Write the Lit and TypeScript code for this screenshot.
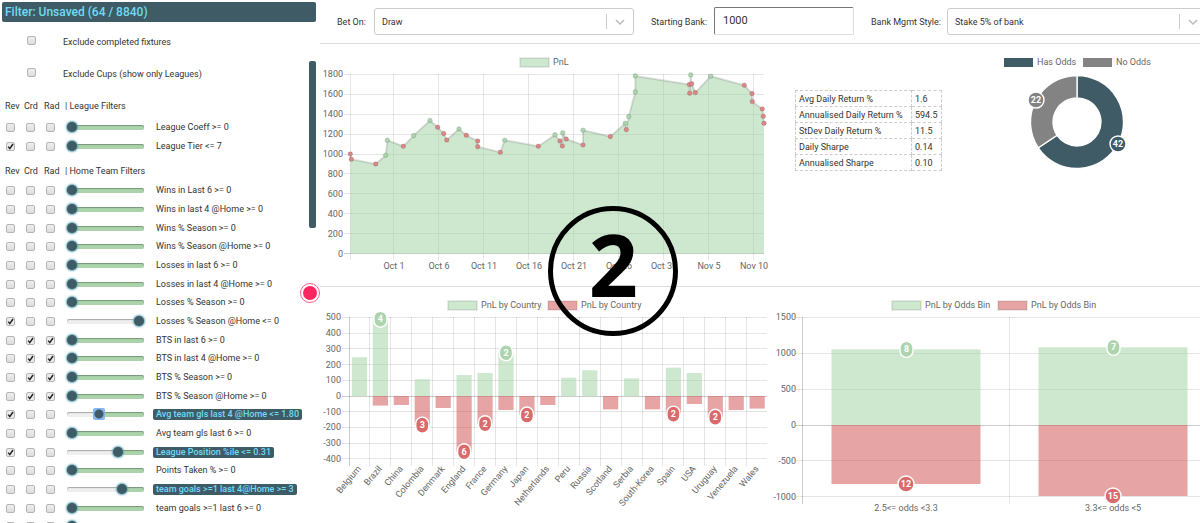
import { LitElement, html, svg, css } from "lit";
import { customElement } from "lit/decorators.js";

type Tone = "g" | "r";
type Filter = { label: string; ticks?: string; value?: number; active?: boolean; focus?: boolean };

const LEAGUE: Filter[] = [
  { label: "League Coeff >= 0" },
  { label: "League Tier <= 7", ticks: "100" },
];

const HOME: Filter[] = [
  { label: "Wins in Last 6 >= 0" },
  { label: "Wins in last 4 @Home >= 0" },
  { label: "Wins % Season >= 0" },
  { label: "Wins % Season @Home >= 0" },
  { label: "Losses in last 6 >= 0" },
  { label: "Losses in last 4 @Home >= 0" },
  { label: "Losses % Season >= 0" },
  { label: "Losses % Season @Home <= 0", ticks: "100", value: 100 },
  { label: "BTS in last 6 >= 0", ticks: "011" },
  { label: "BTS in last 4 @Home >= 0", ticks: "011" },
  { label: "BTS % Season >= 0", ticks: "011" },
  { label: "BTS % Season @Home >= 0", ticks: "011" },
  { label: "Avg team gls last 4 @Home <= 1.80", ticks: "100", value: 40, active: true, focus: true },
  { label: "Avg team gls last 6 >= 0" },
  { label: "League Position %ile <= 0.31", ticks: "100", value: 69, active: true },
  { label: "Points Taken % >= 0" },
  { label: "team goals >=1 last 4@Home >= 3", value: 75, active: true },
  { label: "team goals >=1 last 6 >= 0" },
  { label: "" },
];

const STATS = [
  ["Avg Daily Return %", "1.6"],
  ["Annualised Daily Return %", "594.5"],
  ["StDev Daily Return %", "11.5"],
  ["Daily Sharpe", "0.14"],
  ["Annualised Sharpe", "0.10"],
];

/* Horizontal position on the time axis, bank after the bet, win or loss */
const BANK: [number, number, Tone][] = [
  [30.3, 1000, "r"], [31.3, 947, "r"], [55.7, 900, "r"], [65.7, 987, "g"], [67.3, 1138, "g"],
  [83.3, 1078, "r"], [93.7, 1185, "g"], [110, 1336, "g"], [117.7, 1269, "r"], [123.7, 1205, "r"],
  [126.7, 1141, "r"], [139, 1252, "g"], [146.3, 1188, "r"], [157.7, 1131, "r"], [157.7, 1074, "r"],
  [180.3, 1017, "r"], [184.7, 1138, "g"], [218.3, 1078, "r"], [235, 1192, "g"], [240, 1131, "r"],
  [242.3, 1081, "r"], [242.7, 1212, "g"], [246.3, 1151, "r"], [263, 1091, "r"], [263, 1239, "g"],
  [290.3, 1175, "r"], [305.3, 1309, "g"], [306.3, 1245, "r"], [308.7, 1376, "g"], [315.3, 1624, "g"],
  [315.3, 1785, "g"], [369.3, 1698, "r"], [369.7, 1611, "r"], [370.7, 1795, "g"], [371.7, 1705, "r"],
  [375.3, 1617, "r"], [390.7, 1782, "g"], [424.3, 1691, "r"], [432, 1607, "r"], [432.3, 1527, "r"],
  [442.3, 1453, "r"], [443.3, 1379, "r"], [444, 1309, "r"],
];
const DATES = ["Oct 1", "Oct 6", "Oct 11", "Oct 16", "Oct 21", "Oct 26", "Oct 31", "Nov 5", "Nov 10"];

/* Country, winnings, losses, winning bets shown, losing bets shown */
const COUNTRIES: [string, number, number, number?, number?][] = [
  ["Belgium", 246, 0], ["Brazil", 488, -61, 4], ["China", 0, -57], ["Colombia", 106, -185, 0, 3],
  ["Denmark", 0, -76], ["England", 133, -354, 0, 6], ["France", 146, -176, 0, 2], ["Germany", 275, -89, 2],
  ["Japan", 0, -121, 0, 2], ["Netherlands", 0, -57], ["Peru", 116, 0], ["Russia", 163, 0],
  ["Scotland", 0, -85], ["Serbia", 112, 0], ["South-Korea", 0, -85], ["Spain", 180, -115, 0, 2],
  ["USA", 146, -51], ["Uruguay", 0, -135, 0, 2], ["Venezuela", 0, -89], ["Wales", 0, -80],
];

const ODDS: [string, number, number, number, number][] = [
  ["2.5<= odds <3.3", 1055, -823, 8, 12],
  ["3.3<= odds <5", 1083, -990, 7, 15],
];

const crisp = (n: number) => Math.floor(n) + 0.5;

const chartStyles = css`
  :host { display: block; min-width: 0; }
  svg { display: block; width: 100%; height: auto; overflow: visible; }
  text { font: 9px Roboto, "Liberation Sans", sans-serif; fill: #666; }
  .end { text-anchor: end; }
  .mid { text-anchor: middle; }
  .grid { stroke: rgba(0, 0, 0, 0.1); }
  .zero { stroke: rgba(0, 0, 0, 0.2); }
  .g { fill: rgba(165, 211, 167, 0.55); }
  .r { fill: rgba(211, 90, 90, 0.55); }
  .key { stroke: rgba(0, 0, 0, 0.08); stroke-width: 2; }
  .badge { stroke: #fff; stroke-width: 1.4; }
  .badge.g { fill: #aed4ae; }
  .badge.r { fill: #d86c6c; }
  .count { font-size: 9px; font-weight: 700; fill: #fff; text-anchor: middle; }
`;

const legend = (x: number, tone: Tone, label: string) => svg`
  <rect class="key ${tone}" x=${x + 1} y="14" width="29" height="9"></rect>
  <text x=${x + 34} y="21">${label}</text>`;

const badge = (x: number, y: number, tone: Tone, n: number) => {
  const w = n > 9 ? 16 : 13;
  return svg`
    <rect class="badge ${tone}" x=${x - w / 2} y=${y - 8} width=${w} height="16" rx=${w / 2}></rect>
    <text class="count" x=${x} y=${y + 3}>${n}</text>`;
};

@customElement("bank-chart")
class BankChart extends LitElement {
  static styles = [chartStyles, css`
    .line { fill: none; stroke: rgba(0, 0, 0, 0.12); stroke-width: 2; stroke-linejoin: round; }
    .dot { stroke: rgba(0, 0, 0, 0.12); }
    .dot.g { fill: rgba(165, 211, 167, 0.9); }
    .dot.r { fill: #dc8686; }
  `];
  render() {
    const y = (v: number) => 209.5 - v * 0.0995;
    const path = BANK.map(([px, v]) => `${px},${y(v)}`).join(" ");
    const levels = [0, 200, 400, 600, 800, 1000, 1200, 1400, 1600, 1800];
    return html`<svg viewBox="0 0 455 242" role="img" aria-label="PnL">
      ${legend(199, "g", "PnL")}
      ${levels.map((v) => svg`
        <line class=${v ? "grid" : "zero"} x1="24" x2="444" y1=${crisp(y(v))} y2=${crisp(y(v))}></line>
        <text class="end" x="23" y=${y(v) + 3}>${v}</text>`)}
      <line class="grid" x1="30.5" x2="30.5" y1="30" y2="216"></line>
      ${DATES.map((d, i) => svg`
        <line class="grid" x1=${crisp(73 + i * 45)} x2=${crisp(73 + i * 45)} y1="30" y2="216"></line>
        <text class="mid" x=${74 + i * 45} y="225">${d}</text>`)}
      <polygon class="g" points="30.3,209.5 ${path} 444,209.5"></polygon>
      <polyline class="line" points=${path}></polyline>
      ${BANK.map(([px, v, t]) => svg`<circle class="dot ${t}" cx=${px} cy=${y(v)} r="2.3"></circle>`)}
    </svg>`;
  }
}

@customElement("country-chart")
class CountryChart extends LitElement {
  static styles = chartStyles;
  render() {
    const step = 20.93;
    const y = (v: number) => 109 - v * 0.1574;
    const cx = (i: number) => 29 + step * (i + 0.5);
    const levels = [500, 400, 300, 200, 100, 0, -100, -200, -300, -400];
    return html`<svg viewBox="0 0 460 236" role="img" aria-label="PnL by Country">
      ${legend(127, "g", "PnL by Country")}
      ${legend(227, "r", "PnL by Country")}
      ${levels.map((v) => svg`
        <line class=${v ? "grid" : "zero"} x1="22" x2="447" y1=${crisp(y(v))} y2=${crisp(y(v))}></line>
        <text class="end" x="21" y=${y(v) + 3}>${v}</text>`)}
      ${COUNTRIES.map(([name, up, down], i) => svg`
        <line class=${i ? "grid" : "zero"} x1=${crisp(29 + step * i)} x2=${crisp(29 + step * i)} y1="30" y2="179"></line>
        <rect class="g" x=${cx(i) - 7.6} y=${y(up)} width="15.2" height=${y(0) - y(up)}></rect>
        <rect class="r" x=${cx(i) - 7.6} y=${y(0)} width="15.2" height=${y(down) - y(0)}></rect>
        <text class="end" transform="translate(${cx(i) + 2} 182) rotate(-50)">${name}</text>`)}
      ${COUNTRIES.map(([, up, down, wins, losses], i) => [
        wins ? badge(cx(i), y(up), "g", wins) : "",
        losses ? badge(cx(i), y(down), "r", losses) : "",
      ])}
    </svg>`;
  }
}

@customElement("odds-chart")
class OddsChart extends LitElement {
  static styles = chartStyles;
  render() {
    const y = (v: number) => 138 - v * 0.0717;
    const cx = (i: number) => 126 + 207 * i;
    return html`<svg viewBox="0 0 420 236" role="img" aria-label="PnL by Odds Bin">
      ${legend(111, "g", "PnL by Odds Bin")}
      ${legend(217, "r", "PnL by Odds Bin")}
      ${[1500, 1000, 500, 0, -500, -1000].map((v) => svg`
        <line class=${v ? "grid" : "zero"} x1="16" x2="420" y1=${crisp(y(v))} y2=${crisp(y(v))}></line>
        <text class="end" x="16" y=${y(v) + 3}>${v}</text>`)}
      ${ODDS.map(([name, up, down], i) => svg`
        <line class=${i ? "grid" : "zero"} x1=${22.5 + 207 * i} x2=${22.5 + 207 * i} y1="30" y2="217"></line>
        <rect class="g" x=${cx(i) - 74.5} y=${y(up)} width="149" height=${y(0) - y(up)}></rect>
        <rect class="r" x=${cx(i) - 74.5} y=${y(0)} width="149" height=${y(down) - y(0)}></rect>
        <text class="mid" x=${cx(i)} y="224">${name}</text>`)}
      ${ODDS.map(([, up, down, wins, losses], i) => [
        badge(cx(i) + 0.5, y(up), "g", wins),
        badge(cx(i), y(down), "r", losses),
      ])}
    </svg>`;
  }
}

@customElement("odds-donut")
class OddsDonut extends LitElement {
  static styles = [chartStyles, css`
    .has { fill: #3f5b66; }
    .none { fill: #838383; }
    .slice { stroke: #fff; stroke-width: 1.3; }
  `];
  private slice(from: number, to: number, cls: string) {
    const at = (r: number, turn: number) => {
      const a = turn * 2 * Math.PI;
      return `${97 + r * Math.sin(a)} ${78 - r * Math.cos(a)}`;
    };
    const big = to - from > 0.5 ? 1 : 0;
    return svg`<path class="slice ${cls}" d="M${at(46.5, from)} A46.5 46.5 0 ${big} 1 ${at(46.5, to)} L${at(24, to)} A24 24 0 ${big} 0 ${at(24, from)} Z"></path>`;
  }
  render() {
    return html`<svg viewBox="0 0 220 242" role="img" aria-label="Fixtures with odds">
      <rect class="has" x="24" y="14" width="29" height="9"></rect>
      <text x="57" y="21">Has Odds</text>
      <rect class="none" x="103" y="14" width="29" height="9"></rect>
      <text x="136" y="21">No Odds</text>
      ${this.slice(0, 42 / 64, "has")}
      ${this.slice(42 / 64, 1, "none")}
      <circle class="badge none" cx="56" cy="56" r="8"></circle>
      <text class="count" x="56" y="59">22</text>
      <circle class="badge has" cx="138" cy="100" r="8"></circle>
      <text class="count" x="138" y="103">42</text>
    </svg>`;
  }
}

@customElement("filter-panel")
class FilterPanel extends LitElement {
  static styles = css`
    :host { display: grid; grid-template-rows: auto 1fr; min-height: 0; padding: 2px 3px 0 2px; box-sizing: border-box; overflow: hidden; }
    h1 { margin: 0; padding: 0 3px; font-size: 12px; font-weight: 500; line-height: 20px; color: #6fdcf5; background: #3f5b66; border-radius: 2px; }
    .body { display: flex; justify-content: space-between; min-height: 0; overflow: hidden; }
    .list { flex: 1; min-width: 0; padding-top: 4px; }
    .thumb { width: 7px; height: 167px; margin-top: 39px; border-radius: 2px; background: #3f5b66; }
    .only { display: flex; align-items: center; height: 32px; padding-left: 25px; gap: 27px; }
    .only input { margin-bottom: 3px; }
    .head { display: grid; grid-template-columns: 19px 20px 21px 1fr; align-items: center; height: 25px; padding: 4px 0 0 3px; box-sizing: border-box; margin: 0; font-size: 9px; font-weight: 400; }
    .head.first { height: 28px; }
    ul { list-style: none; margin: 0; padding: 0; }
    li { display: flex; align-items: center; height: 19px; padding-left: 4px; }
    li:nth-child(3n) { height: 18px; }
    .check { appearance: none; flex: none; width: 9px; height: 9px; margin: 0; border: 1px solid #b4b4b4; border-radius: 2px; background: linear-gradient(#eee, #ddd); }
    li .check { margin-right: 11px; }
    .check:checked { background: url("data:image/svg+xml,%3Csvg xmlns='http://www.w3.org/2000/svg' viewBox='0 0 7 7'%3E%3Cpath d='M1.2 3.6 2.8 5.6 6 1' fill='none' stroke='%23222' stroke-width='1.5'/%3E%3C/svg%3E") center / 7px 7px no-repeat, #eaeaea; }
    .range { appearance: none; flex: none; width: 77px; height: 12px; margin: 0 9px 0 1px; background: none; }
    .range::-webkit-slider-runnable-track {
      height: 5px; box-sizing: border-box; border-radius: 2px; box-shadow: inset 0 1px 1px rgba(0, 0, 0, 0.3);
      background: linear-gradient(to right, #eee var(--at), #abd4ac var(--at));
    }
    .range::-webkit-slider-thumb { appearance: none; width: 10px; height: 10px; margin-top: -3px; border-radius: 50%; background: #3f5b66; box-shadow: 0 0 2px 1px #5fa3b5; }
    .range.focus::-webkit-slider-thumb { width: 12px; height: 12px; margin-top: -4px; border-radius: 2px; background: radial-gradient(circle, #3f5b66 4px, #86b4ee 5px); box-shadow: none; }
    .name { font-size: 9px; line-height: 11px; padding: 0 3px; border-radius: 2px; white-space: nowrap; }
    .name.active { background: #3f5b66; color: #6fdcf5; font-weight: 500; }
  `;
  private row(f: Filter, id: string) {
    const at = f.value ?? 0;
    return html`<li>
      ${["Rev", "Crd", "Rad"].map((k, i) => html`<input class="check" type="checkbox" aria-label="${k} ${f.label}" .checked=${f.ticks?.[i] === "1"}>`)}
      <input class="range ${f.focus ? "focus" : ""}" type="range" id=${id} min="0" max="100" .value=${String(at)} style="--at: ${at}%">
      <label class="name ${f.active ? "active" : ""}" for=${id}>${f.label}</label>
    </li>`;
  }
  private head(title: string, first = false) {
    return html`<h2 class="head ${first ? "first" : ""}"><span>Rev</span><span>Crd</span><span>Rad</span><span>| ${title}</span></h2>`;
  }
  render() {
    return html`
      <h1>Filter: Unsaved (64 / 8840)</h1>
      <div class="body">
        <div class="list">
          <label class="only"><input class="check" type="checkbox">Exclude completed fixtures</label>
          <label class="only"><input class="check" type="checkbox">Exclude Cups (show only Leagues)</label>
          ${this.head("League Filters", true)}
          <ul>${LEAGUE.map((f, i) => this.row(f, `league-${i}`))}</ul>
          ${this.head("Home Team Filters")}
          <ul>${HOME.map((f, i) => this.row(f, `home-${i}`))}</ul>
        </div>
        <div class="thumb"></div>
      </div>`;
  }
}

@customElement("app-root")
class AppRoot extends LitElement {
  static styles = css`
    :host { display: grid; grid-template-columns: 319px minmax(0, 1fr); height: 100vh; overflow: hidden; position: relative; background: #fff; color: #333; font: 9px Roboto, "Liberation Sans", sans-serif; }
    main { position: relative; min-width: 0; padding-left: 1px; }
    .bar { display: flex; gap: 17px; height: 44px; padding-left: 17px; box-sizing: border-box; border-bottom: 1px solid #ddd; overflow: hidden; }
    .field { display: flex; flex: none; align-items: center; justify-content: space-between; width: 297px; }
    .field.bank { width: 203px; }
    .field.style { width: 336px; }
    .pick { position: relative; width: 260px; }
    select { appearance: none; display: block; width: 100%; height: 27px; padding: 0 36px 0 7px; border: 1px solid #ccc; border-radius: 3px; background: #fff; color: #333; font: inherit; }
    .arrow { position: absolute; right: 0; top: 6px; width: 27px; height: 15px; border-left: 1px solid #ccc; pointer-events: none; }
    .arrow path { fill: none; stroke: #bbb; stroke-width: 1.5; }
    .amount { width: 140px; height: 28px; margin-bottom: 2px; padding: 0 8px; box-sizing: border-box; border: 1px solid #ddd; border-top-color: #777; border-left-color: #777; border-radius: 2px; color: #333; font: 11px Roboto, "Liberation Sans", sans-serif; }
    .top { display: grid; grid-template-columns: 455fr 205fr 220fr; border-bottom: 1px solid #ddd; }
    .bottom { display: grid; grid-template-columns: 460fr 420fr; }
    .stats { padding: 46px 0 0 20px; }
    table { border-collapse: collapse; color: #333; }
    td { height: 15px; padding: 0 3px; border: 1px dashed #ccc; white-space: nowrap; }
    td.key { width: 109px; }
    td.num { width: 23px; }
    .pin { position: absolute; left: 300px; top: 283px; width: 20px; height: 20px; padding: 2px; box-sizing: border-box; border: 1px solid #ff5c86; border-radius: 50%; background: #ff2560 content-box; background-clip: content-box; }
    .step { position: absolute; left: 33.4%; top: 206px; width: 130px; height: 130px; margin-left: -65px; box-sizing: border-box; border: 5px solid #000; border-radius: 50%; text-align: center; color: #000; font: 700 86px/106px "Open Sans", "Noto Sans", sans-serif; pointer-events: none; }
  `;
  private pick(id: string, text: string) {
    return html`<span class="pick">
      <select id=${id}><option>${text}</option></select>
      <svg class="arrow" viewBox="0 0 27 15" aria-hidden="true"><path d="M9 6l4 4 4-4"></path></svg>
    </span>`;
  }
  render() {
    return html`
      <filter-panel></filter-panel>
      <main>
        <form class="bar">
          <div class="field"><label for="bet">Bet On:</label>${this.pick("bet", "Draw")}</div>
          <div class="field bank"><label for="bank">Starting Bank:</label><input class="amount" id="bank" .value=${"1000"}></div>
          <div class="field style"><label for="style">Bank Mgmt Style:</label>${this.pick("style", "Stake 5% of bank")}</div>
        </form>
        <section class="top">
          <bank-chart></bank-chart>
          <div class="stats">
            <table><tbody>${STATS.map(([k, v]) => html`<tr><td class="key">${k}</td><td class="num">${v}</td></tr>`)}</tbody></table>
          </div>
          <odds-donut></odds-donut>
        </section>
        <section class="bottom">
          <country-chart></country-chart>
          <odds-chart></odds-chart>
        </section>
        <div class="step">2</div>
      </main>
      <button class="pin" aria-label="Toggle panel"></button>`;
  }
}
